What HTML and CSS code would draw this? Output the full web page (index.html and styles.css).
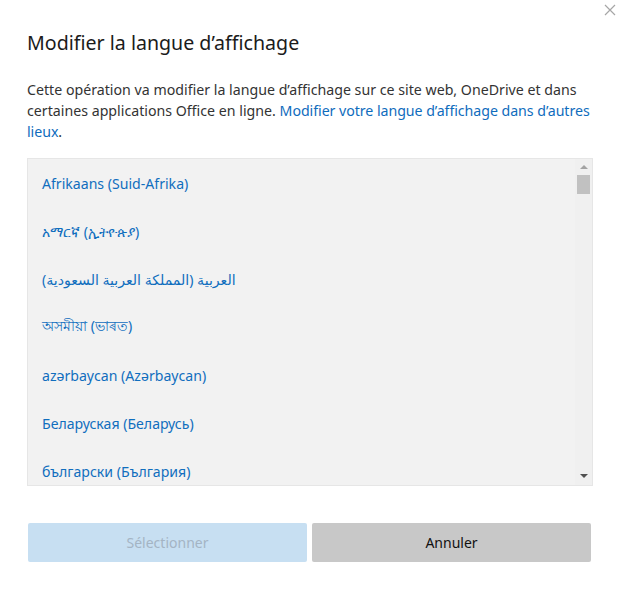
FILE: index.html
```html
<!DOCTYPE html>
<html lang="fr">
<head>
<meta charset="utf-8">
<title>Modifier la langue d'affichage</title>
<link rel="stylesheet" href="styles.css">
</head>
<body>
<div class="dialog">
  <button class="close" aria-label="Fermer">
    <svg width="12" height="12" viewBox="0 0 12 12"><path d="M1 1L11 11M11 1L1 11" stroke="#a6a6a6" stroke-width="1.2" fill="none"/></svg>
  </button>
  <h1 class="title">Modifier la langue d’affichage</h1>
  <p class="desc">Cette opération va modifier la langue d’affichage sur ce site web, OneDrive et dans certaines applications Office en ligne. <a class="link" href="#">Modifier votre langue d’affichage dans d’autres lieux</a>.</p>
  <div class="listbox">
    <ul class="items">
      <li class="item">Afrikaans (Suid-Afrika)</li>
      <li class="item">አማርኛ (ኢትዮጵያ)</li>
      <li class="item"><span dir="rtl">العربية (المملكة العربية السعودية)</span></li>
      <li class="item">অসমীয়া (ভাৰত)</li>
      <li class="item">azərbaycan (Azərbaycan)</li>
      <li class="item">Беларуская (Беларусь)</li>
      <li class="item">български (България)</li>
    </ul>
    <div class="scrollbar">
      <div class="arrow up"></div>
      <div class="thumb"></div>
      <div class="track"></div>
      <div class="arrow down"></div>
    </div>
  </div>
  <div class="actions">
    <button class="btn primary" disabled>Sélectionner</button>
    <button class="btn secondary">Annuler</button>
  </div>
</div>
</body>
</html>
```

FILE: styles.css
```css
* { box-sizing: border-box; }
html, body { margin: 0; padding: 0; background: #fff; }
body {
  font-family: "Noto Sans", "Open Sans", "DejaVu Sans", sans-serif;
  color: #333;
}
.dialog {
  position: relative;
  width: 621px;
  height: 594px;
  padding: 29px 28px 0 27px;
}
.close {
  position: absolute;
  top: 3px;
  right: 4px;
  width: 14px;
  height: 14px;
  padding: 1px;
  border: 0;
  background: transparent;
  display: flex;
}
.title {
  margin: 0;
  font-size: 19.6px;
  font-weight: 400;
  color: #1b1b1b;
  line-height: 28px;
}
.desc {
  margin: 22px -8px 0 0;
  font-size: 14.2px;
  line-height: 21px;
  color: #333;
}
.link { color: #0f6cbd; text-decoration: none; letter-spacing: -0.05px; }
.listbox {
  margin-top: 16px;
  height: 328px;
  width: 566px;
  background: #f2f2f2;
  border: 1px solid #e6e6e6;
  display: flex;
  overflow: hidden;
}
.items {
  list-style: none;
  margin: 0;
  padding: 0;
  flex: 1;
  overflow: hidden;
}
.item {
  height: 48px;
  display: flex;
  align-items: center;
  padding-left: 14px;
  font-size: 14.1px;
  color: #106ebe;
}
.scrollbar {
  width: 17px;
  display: flex;
  flex-direction: column;
  align-items: center;
  background: #f0f0f0;
  padding-top: 6px;
}
.arrow {
  width: 0;
  height: 0;
  border-left: 4px solid transparent;
  border-right: 4px solid transparent;
}
.arrow.up { border-bottom: 4px solid #a3a3a3; margin-bottom: 6px; }
.arrow.down { border-top: 4px solid #505050; margin-bottom: 7px; }
.thumb {
  width: 13px;
  height: 19px;
  background: #c1c1c1;
}
.track { flex: 1; }
.actions {
  margin-top: 37px;
  display: flex;
  gap: 5px;
  padding-left: 1px;
  padding-right: 2px;
}
.btn {
  flex: 1;
  height: 39px;
  border: 0;
  border-radius: 2px;
  font-family: inherit;
  font-size: 14px;
}
.primary { background: #c7dff2; color: #a4b4c4; }
.secondary { background: #c8c8c8; color: #111; }
```
